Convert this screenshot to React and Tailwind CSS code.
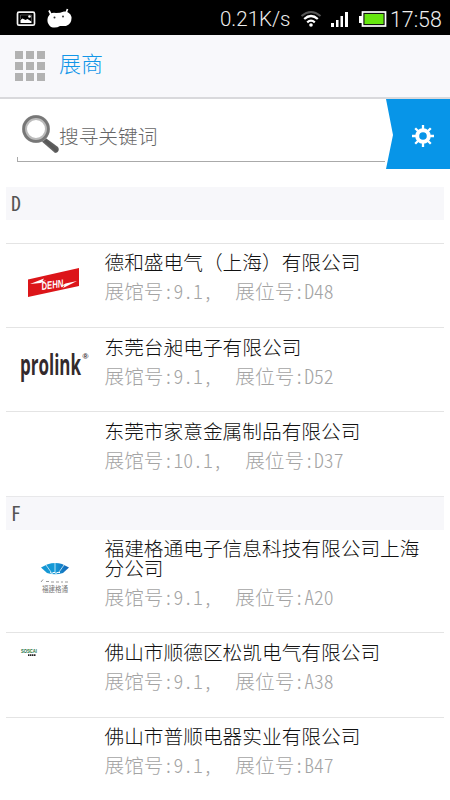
const cjk = "font-['Noto_Sans_CJK_SC',sans-serif]";

function StatusBar() {
  return (
    <div className="flex h-[35px] items-center bg-black text-white">
      <svg className="ml-4 mt-[3px] h-[16px] w-[20px]" viewBox="0 0 20 16">
        <rect x="1.5" y="1.2" width="17" height="13" rx="1.5" fill="none" stroke="#f4f4f4" strokeWidth="1.7" />
        <path d="M4.500 12V9l2-1.500 3 1.500 2-1 4 2.500V12z" fill="#fff" />
        <path d="M4.500 8V4h11v7" fill="none" stroke="#777" strokeWidth=".6" />
        <circle cx="13.500" cy="5.500" r="1.300" fill="#fff" />
      </svg>
      <svg className="ml-[11px] h-[20px] w-[26px]" viewBox="0 0 26 20">
        <path d="M2 2.500l2 4M20.500 1l-1.500 4" stroke="#fff" strokeWidth="1.700" />
        <path d="M3 6Q6 4 9 5Q13 5 17 3.500Q23 3.500 24.500 9Q25 16 19 18L13 18Q9 20.500 4 19Q-1 15 1 9Z" fill="#fff" />
        <circle cx="7.500" cy="9.500" r="1" fill="#333" />
        <circle cx="16" cy="8.500" r="1" fill="#333" />
      </svg>
      <span className="ml-[147px] mt-[3px] w-[72px] whitespace-nowrap font-['Roboto',sans-serif] text-[20.5px] font-light leading-5 text-[#eee]">0.21K/s</span>
      <svg className="ml-[8px] mt-[2px] h-[18px] w-[22px]" viewBox="0 0 22 18" fill="none" strokeWidth="2">
        <path d="M1.500 6Q11-2 20.500 6" stroke="#555" />
        <path d="M4.200 9Q11 3 17.800 9M7.200 12.300Q11 9 14.800 12.300" stroke="#fff" strokeWidth="2.300" />
        <circle cx="11" cy="15" r="1.800" fill="#fff" />
      </svg>
      <svg className="ml-[9px] mt-[3px] h-[16px] w-[18px]" viewBox="0 0 18 16" fill="#fff">
        <path d="M0 12h3v4H0zM5 9h2.500v7H5zM9.500 5H12v11H9.500zM14 1h3v15h-3z" />
      </svg>
      <svg className="ml-[10px] mt-[2px] h-[16px] w-[28px]" viewBox="0 0 28 16">
        <path d="M0 5h3v7H0z" fill="#fff" />
        <rect x="3.500" y="1" width="23" height="14" fill="#111" stroke="#fff" strokeWidth="1.700" />
        <rect x="5.500" y="3" width="19" height="10" fill="#66e60f" />
      </svg>
      <span className="ml-[3px] mt-[4px] font-['Roboto',sans-serif] text-[21.3px] font-light leading-5 text-[#eee]">17:58</span>
    </div>
  );
}

function Header() {
  return (
    <header className="flex h-[64px] items-center border-b-2 border-[#d9d9dc] bg-[#f8f8fb] pl-[15px]">
      <div className="grid grid-cols-[8px_8px_8px] gap-[3px]">
        {Array.from({ length: 9 }, (_, i) => (
          <i key={i} className="size-[8px] bg-[#b2b2b2]" />
        ))}
      </div>
      <h1 className="ml-[14px] mt-[-8px] text-[22px] font-light leading-8 text-[#1296e8]">展商</h1>
    </header>
  );
}

function Search() {
  return (
    <div className="flex h-[71px]">
      <div className="ml-[17px] flex h-[62.5px] w-[368px] flex-col justify-end">
        <div className="flex h-[57px] items-center pl-[4px]">
          <svg className="mt-[12px] size-[39px]" viewBox="0 0 39 39">
            <defs>
              <linearGradient id="handle" x1="0" y1="1" x2="1" y2="0">
                <stop stopColor="#b5b5b5" />
                <stop offset=".5" stopColor="#555" />
                <stop offset="1" stopColor="#888" />
              </linearGradient>
            </defs>
            <path d="M22 21L37 32Q39 35 36 37.500L34 38L19 25Z" fill="url(#handle)" />
            <circle cx="15" cy="14" r="11.500" fill="#fff" stroke="#bbb" strokeWidth="5" />
            <circle cx="15" cy="14" r="12.300" fill="none" stroke="#777" strokeWidth="2.800" />
          </svg>
          <span className="ml-[-1px] mt-[15px] text-[19.7px] font-light text-[#666]">搜寻关键词</span>
        </div>
        <div className="h-[5px] border-b border-l border-[#aaa]" />
      </div>
      <svg className="ml-auto h-[71px] w-[64px]" viewBox="0 0 64 71">
        <path d="M0 0h64v70H0l7-34z" fill="#0795e8" />
        <g transform="translate(37 37)" stroke="#fff" fill="none">
          <circle r="5.800" strokeWidth="4" />
          <path d="M0-7v-4M0 7v4M-7 0h-4M7 0h4M5-5l2.800-2.800M-5-5l-2.800-2.800M5 5l2.800 2.800M-5 5l-2.800 2.800" strokeWidth="2.300" />
        </g>
      </svg>
    </div>
  );
}

function DehnLogo() {
  return (
    <svg className="ml-[21px] mt-[23px] h-[32px] w-[53px]" viewBox="0 0 53 32">
      <path d="M1 12.500L52 1v18L1 30z" fill="#dc1519" />
      <path d="M3 17l14-5.500-1.500 2.500 4-.5-6 2.500z" fill="#fff" />
      <path d="M50 14l-14 7 1.500-2.500-4 1 5-3z" fill="#fff" />
      <text x="15" y="23" transform="rotate(-8 15 23)" fontSize="11" fontWeight="700" fontStyle="italic" fontFamily="Liberation Sans" fill="#fff" textLength="22" lengthAdjust="spacingAndGlyphs">DEHN</text>
    </svg>
  );
}

function ProlinkLogo() {
  return (
    <svg className="ml-[14px] mt-[22px] h-[40px] w-[76px] overflow-visible" viewBox="0 0 76 40">
      <text x="0" y="25" fontSize="29" fontFamily="Open Sans" fontWeight="700" fill="#332a2c" textLength="61" lengthAdjust="spacingAndGlyphs">prolink</text>
      <text x="62.500" y="9" fontSize="8" fontFamily="Liberation Sans" fontWeight="700" fill="#332a2c">®</text>
    </svg>
  );
}

function FanLogo() {
  return (
    <svg className="ml-[20px] mt-[32px] h-[34px] w-[65px]" viewBox="0 0 65 34">
      <defs>
        <linearGradient id="fan">
          <stop stopColor="#1595d2" />
          <stop offset=".5" stopColor="#159bd8" />
          <stop offset="1" stopColor="#1562b4" />
        </linearGradient>
        <linearGradient id="line">
          <stop stopColor="#ddd" stopOpacity="0" />
          <stop offset=".5" stopColor="#bbb" />
          <stop offset="1" stopColor="#ddd" stopOpacity="0" />
        </linearGradient>
      </defs>
      <path d="M15 5.500L21 2.500Q29 0 36 2L43 5.500L37 11Q29 13.500 21 11Z" fill="url(#fan)" />
      <path d="M29 1v9M20 3l5 7M38 3l-5 7" stroke="#fff" strokeWidth=".7" />
      <path d="M24 10.500l2 .8 2-1 2 1 2-1 2 .3" stroke="#fff" fill="none" />
      <path d="M15 20l2-2.500M20 19.500h3M25 20h3M30 20h3M35 20h2M39 20h3" stroke="#999" />
      <path d="M0 22.500h65" stroke="url(#line)" strokeWidth="1.500" />
      <text x="16" y="30" fontSize="7.500" fontFamily="Noto Sans CJK SC" fill="#777" textLength="26" lengthAdjust="spacingAndGlyphs">福建格通</text>
    </svg>
  );
}

function SoscaiLogo() {
  return (
    <svg className="ml-[15px] mt-[15px] h-[9px] w-[18px] overflow-visible" viewBox="0 0 18 9">
      <text x="0" y="5" fontSize="5.500" fontFamily="Liberation Sans" fontWeight="700" fill="#187044" textLength="16" lengthAdjust="spacingAndGlyphs">SOSCAI</text>
      <path d="M7 7.200h8" stroke="#222" strokeWidth="1.800" strokeDasharray="1.500 .5" />
      <path d="M8 1.500l2 2" stroke="#a8c42a" />
    </svg>
  );
}

function Exhibitor({ name, hall, booth, logo, tall }) {
  return (
    <li className={`flex border-[#e4e4e4] ${tall ? "h-[102.500px]" : "h-[84.4px] border-t"}`}>
      <div className="w-[98.5px] shrink-0">{logo}</div>
      <div className={tall ? "pt-[8px]" : "pt-[8.8px]"}>
        <p className="w-[325px] text-[19.7px] font-light leading-[20px] text-[#111]">{name}</p>
        <p className="mt-[9px] flex whitespace-pre text-[19.7px] font-light leading-[20px] text-[#a4a4a4] [font-feature-settings:'hwid']">
          <span>展馆号:{hall},</span>
          <span className="ml-[22.5px]">展位号:{booth}</span>
        </p>
      </div>
    </li>
  );
}

function Letter({ children }) {
  return <h2 className="h-[33px] bg-[#f7f7fa] pl-[5px] text-[19.7px] font-normal leading-[32px] text-[#555] [font-feature-settings:'hwid']">{children}</h2>;
}

export default function App() {
  return (
    <div className={`h-[800px] w-[450px] overflow-hidden bg-white ${cjk}`}>
      <StatusBar />
      <Header />
      <Search />
      <main className="mx-[6px] mt-[17px]">
        <Letter>D</Letter>
        <ul className="mt-[22.5px]">
          <Exhibitor name="德和盛电气（上海）有限公司" hall="9.1" booth="D48" logo={<DehnLogo />} />
          <Exhibitor name="东莞台昶电子有限公司" hall="9.1" booth="D52" logo={<ProlinkLogo />} />
          <Exhibitor name="东莞市家意金属制品有限公司" hall="10.1" booth="D37" />
        </ul>
        <div className="border-t border-[#e8e8ea]">
          <Letter>F</Letter>
        </div>
        <ul>
          <Exhibitor tall name="福建格通电子信息科技有限公司上海分公司" hall="9.1" booth="A20" logo={<FanLogo />} />
          <Exhibitor name="佛山市顺德区松凯电气有限公司" hall="9.1" booth="A38" logo={<SoscaiLogo />} />
          <Exhibitor name="佛山市普顺电器实业有限公司" hall="9.1" booth="B47" />
        </ul>
      </main>
    </div>
  );
}
